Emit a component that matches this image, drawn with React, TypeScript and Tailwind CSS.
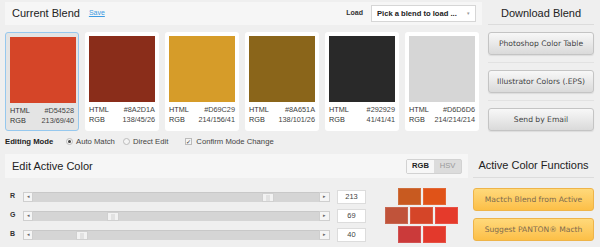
import React from "react";

const swatches = [
  { hex: "#D54528", rgb: "213/69/40" },
  { hex: "#8A2D1A", rgb: "138/45/26" },
  { hex: "#D69C29", rgb: "214/156/41" },
  { hex: "#8A651A", rgb: "138/101/26" },
  { hex: "#292929", rgb: "41/41/41" },
  { hex: "#D6D6D6", rgb: "214/214/214" },
];

const sliders = [
  { label: "R", value: 213 },
  { label: "G", value: 69 },
  { label: "B", value: 40 },
];

const bricks = [
  ["#c85a20", "#e05318"],
  ["#c0533a", "#d54528", "#e53a2b"],
  ["#cb3a3a", "#e3392c"],
];

function GreyButton({ children }: { children: React.ReactNode }) {
  return (
    <div className="h-[23px] flex items-center justify-center rounded-[3px] border border-[#c4c4c4] bg-linear-to-b from-[#f8f8f8] to-[#dadada] shadow-[0_1px_1px_rgba(0,0,0,0.08)] font-['DejaVu_Sans',sans-serif] text-[7.6px] text-[#444]">
      {children}
    </div>
  );
}

function OrangeButton({ children }: { children: React.ReactNode }) {
  return (
    <div className="h-[23px] flex items-center justify-center rounded-[3px] border border-[#eeb449] bg-linear-to-b from-[#ffd97a] to-[#fcbf46] font-['DejaVu_Sans',sans-serif] text-[7.6px] text-[#7d6b4f]">
      {children}
    </div>
  );
}

function Slider({ value }: { value: number }) {
  const left = Math.round((274 * value) / 255);
  return (
    <div className="relative flex h-[10px] w-[307px] bg-[#d5d5d5] border-t border-[#c8c8c8]">
      <div className="w-[10px] h-[10px] -mt-px bg-[#f5f5f5] border border-[#cfcfcf] flex items-center justify-center text-[5px] text-[#666]">
        ◂
      </div>
      <div className="flex-1" />
      <div className="w-[11px] h-[10px] -mt-px bg-[#f5f5f5] border border-[#cfcfcf] flex items-center justify-center text-[5px] text-[#666]">
        ▸
      </div>
      <div
        className="absolute top-0 w-[12px] h-[9px] bg-[#f2f2f2] border border-[#d0d0d0] flex justify-center"
        style={{ left: 10 + left }}
      >
        <div className="w-[4px] h-[6px] mt-px bg-[#e2e2e2]" />
      </div>
    </div>
  );
}

export default function App() {
  return (
    <div className="w-[600px] h-[247px] overflow-hidden bg-[#efefef] font-['Liberation_Sans',sans-serif] text-[#222]">
      {/* top row */}
      <div className="flex pt-[2px]">
        <div className="ml-[5px] w-[477px]">
          <div className="h-[23px] flex items-center bg-[#f6f6f6] pl-[7px] pr-[6px]">
            <span className="text-[11px] text-[#222]">Current Blend</span>
            <span className="ml-[9px] text-[7px] text-[#3d9be2] underline">Save</span>
            <span className="ml-auto mr-[8px] text-[7px] font-bold text-[#333]">Load</span>
            <div className="w-[105px] h-[17px] bg-white border border-[#d6d6d6] flex items-center pl-[5px] pr-[5px]">
              <span className="text-[7.6px] font-bold text-[#222]">Pick a blend to load ...</span>
              <span className="ml-auto text-[5px] text-[#999]">▾</span>
            </div>
          </div>

          <div className="flex gap-[6px] mt-[7px]">
            {swatches.map((s, i) => (
              <div
                key={s.hex}
                className={`w-[74px] h-[99px] rounded-[3px] p-[4px] ${
                  i === 0 ? "bg-[#e4e4e4] border border-[#96c8ee] p-[3px]" : "bg-white"
                }`}
              >
                <div className="w-[66px] h-[66px]" style={{ backgroundColor: s.hex }} />
                <div className="mt-[3px] text-[7.3px] leading-[10px] text-[#333]">
                  <div className="flex justify-between">
                    <span>HTML</span>
                    <span className="text-[#444]">{s.hex}</span>
                  </div>
                  <div className="flex justify-between">
                    <span>RGB</span>
                    <span className="text-[#444]">{s.rgb}</span>
                  </div>
                </div>
              </div>
            ))}
          </div>

          <div className="h-[21px] flex items-center text-[7.7px] text-[#444]">
            <span className="font-bold text-[#222] w-[61px]">Editing Mode</span>
            <span className="w-[7px] h-[7px] rounded-full border border-[#bbb] bg-[#f4f4f4] flex items-center justify-center">
              <span className="w-[3px] h-[3px] rounded-full bg-[#444]" />
            </span>
            <span className="ml-[3px]">Auto Match</span>
            <span className="ml-[8px] w-[7px] h-[7px] rounded-full border border-[#bbb] bg-[#f4f4f4]" />
            <span className="ml-[3px]">Direct Edit</span>
            <span className="ml-[17px] w-[7px] h-[7px] border border-[#bbb] bg-[#f4f4f4] flex items-center justify-center text-[6px] leading-none text-[#333]">
              ✓
            </span>
            <span className="ml-[4px]">Confirm Mode Change</span>
          </div>
        </div>

        <div className="ml-[6px] w-[106px]">
          <div className="h-[23px] flex items-center justify-center border-b border-[#dcdcdc] text-[11px] text-[#222]">
            Download Blend
          </div>
          <div className="mt-[7px] pb-[7px] border-b border-[#e2e2e2]">
            <GreyButton>Photoshop Color Table</GreyButton>
          </div>
          <div className="mt-[7px] pb-[7px] border-b border-[#e2e2e2]">
            <GreyButton>Illustrator Colors (.EPS)</GreyButton>
          </div>
          <div className="mt-[7px]">
            <GreyButton>Send by Email</GreyButton>
          </div>
        </div>
      </div>

      {/* bottom row */}
      <div className="flex mt-[2px]">
        <div className="ml-[5px] w-[463px]">
          <div className="h-[24px] flex items-center bg-[#f6f6f6] pl-[7px] pr-[6px]">
            <span className="text-[11px] text-[#222]">Edit Active Color</span>
            <div className="ml-auto flex h-[15px] rounded-[2px] border border-[#d2d2d2] bg-[#dcdcdc] text-[7.6px]">
              <span className="w-[27px] flex items-center justify-center bg-[#f7f7f7] font-bold text-[#222]">RGB</span>
              <span className="w-[27px] flex items-center justify-center text-[#9a9a9a]">HSV</span>
            </div>
          </div>

          <div className="flex mt-[9px]">
            <div>
              {sliders.map((s) => (
                <div key={s.label} className="h-[19px] flex items-center">
                  <span className="ml-[5px] w-[13px] text-[7px] font-bold text-[#333]">{s.label}</span>
                  <Slider value={s.value} />
                  <div className="ml-[7px] w-[29px] h-[14px] bg-white border border-[#dcdcdc] flex items-center justify-center text-[7.5px] text-[#444]">
                    {s.value}
                  </div>
                </div>
              ))}
            </div>
            <div className="ml-[19px] mt-[1px] w-[73px] flex flex-col gap-[2px]">
              {bricks.map((row, r) => (
                <div key={r} className="flex justify-center gap-[2px]">
                  {row.map((c) => (
                    <div
                      key={c}
                      className="w-[23px] h-[17px] shadow-[inset_0_0_0_1px_rgba(255,255,255,0.12)]"
                      style={{ backgroundColor: c }}
                    />
                  ))}
                </div>
              ))}
            </div>
          </div>
        </div>

        <div className="ml-[5px] w-[121px]">
          <div className="h-[24px] flex items-center justify-center border-b border-[#dcdcdc] text-[11px] text-[#222]">
            Active Color Functions
          </div>
          <div className="mt-[10px]">
            <OrangeButton>Mactch Blend from Active</OrangeButton>
          </div>
          <div className="mt-[7px]">
            <OrangeButton>Suggest PANTON® Macth</OrangeButton>
          </div>
        </div>
      </div>
    </div>
  );
}
